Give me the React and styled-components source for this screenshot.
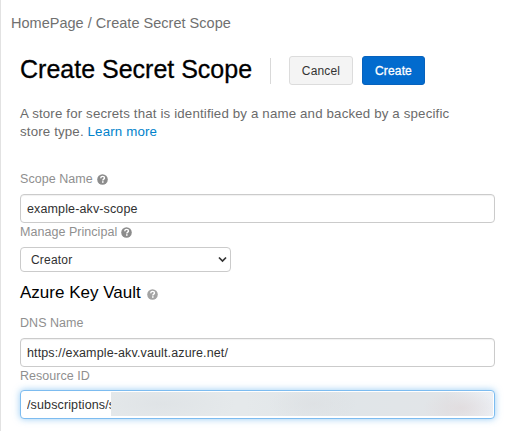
import React from "react";
import styled, { createGlobalStyle } from "styled-components";

const GlobalStyle = createGlobalStyle`
  *, *::before, *::after { box-sizing: border-box; }
  html, body { margin: 0; background: #fff; }
  body { font-family: "Liberation Sans", Arial, sans-serif; overflow: hidden; }
`;

const Page = styled.main`
  height: 431px;
  border-left: 1px solid #e2e2e2;
  padding: 14px 17px 0 10px;
  display: flex;
  flex-direction: column;
`;

const Breadcrumb = styled.nav`
  height: 19px;
  font-size: 14.5px;
  line-height: 19px;
  letter-spacing: 0.02px;
  color: #707070;
  white-space: nowrap;
`;

const Content = styled.div`
  padding: 22px 0 0 9px;
  display: flex;
  flex-direction: column;
`;

const Header = styled.header`
  display: flex;
  align-items: center;
  height: 31px;
`;

const Title = styled.h1`
  width: 250px;
  margin: 0;
  font-size: 25px;
  line-height: 28px;
  font-weight: 400;
  color: #000;
  white-space: nowrap;
  padding-bottom: 4px;
  -webkit-text-stroke: 0.3px #000;
`;

const Divider = styled.span`
  width: 1px;
  height: 26px;
  margin-right: 18px;
  background: #d9d9d9;
`;

const Button = styled.button`
  width: ${(p) => (p.$primary ? 63 : 64)}px;
  height: 29px;
  margin: 0 9px 0 0;
  padding: 1px 0 0;
  border: 1px solid ${(p) => (p.$primary ? "#0762bd" : "#dcdcdc")};
  border-radius: 3px;
  background: ${(p) => (p.$primary ? "#026bce" : "#f4f4f4")};
  color: ${(p) => (p.$primary ? "#fff" : "#333")};
  font-family: inherit;
  font-size: 12px;
  letter-spacing: 0.15px;
  -webkit-text-stroke: ${(p) => (p.$primary ? "0.3px #fff" : "0")};
`;

const Description = styled.p`
  width: 460px;
  margin: 19px 0 0;
  font-size: 13.3px;
  line-height: 18px;
  letter-spacing: 0.15px;
  color: #6b6b6b;
  white-space: nowrap;
`;

const Link = styled.a`
  color: #0082cb;
  text-decoration: none;
`;

const Label = styled.label`
  display: flex;
  align-items: center;
  gap: 4px;
  height: 18px;
  margin-top: ${(p) => p.$top || 0}px;
  margin-bottom: ${(p) => p.$bottom || 0}px;
  font-size: 12.5px;
  letter-spacing: 0.04px;
  color: #8f8f8f;
`;

const Field = styled.div`
  position: relative;
  width: 475px;
  height: 29px;
  padding: 0 6px;
  display: flex;
  align-items: center;
  border: 1px solid ${(p) => (p.$focused ? "#7dbcf0" : "#cbcbcb")};
  border-radius: 4px;
  background: #fff;
  box-shadow: ${(p) => (p.$focused ? "0 0 7px rgba(82, 168, 236, 0.6)" : "inset 0 1px 1px rgba(0, 0, 0, 0.06)")};
`;

const TextInput = styled.input`
  width: ${(p) => (p.$short ? "92px" : "100%")};
  height: 25px;
  padding: 0;
  border: 0;
  outline: 0;
  background: transparent;
  color: #303030;
  font-family: inherit;
  font-size: 12.5px;
  letter-spacing: 0.13px;
`;

const Redaction = styled.span`
  position: absolute;
  left: 90px;
  right: 1px;
  top: 1px;
  bottom: 2px;
  background:
    radial-gradient(ellipse 38px 18px at 350px 16px, rgba(224, 217, 219, 0.75), transparent),
    radial-gradient(ellipse 45px 18px at 202px 12px, rgba(221, 224, 227, 0.8), transparent),
    radial-gradient(ellipse 75px 20px at 50px 12px, rgba(222, 226, 229, 0.8), transparent),
    linear-gradient(90deg, #e5e9eb 0%, #e5e9eb 35%, #e0e5e8 62%, #e2e5e8 88%, #edf0f5 100%);
`;

const SelectBox = styled.div`
  width: 211px;
  height: 25px;
  padding: 0 3px 0 10px;
  display: flex;
  align-items: center;
  justify-content: space-between;
  border: 1px solid #cbcbcb;
  border-radius: 4px;
  font-size: 12px;
  letter-spacing: 0.2px;
  color: #303030;
`;

const SectionTitle = styled.h2`
  display: flex;
  align-items: center;
  gap: 6px;
  height: 22px;
  margin: 10px 0 0;
  font-size: 17px;
  font-weight: 400;
  color: #000;
`;

const HelpSvg = styled.svg`
  flex: none;
  width: 11px;
  height: 11px;
  margin-top: ${(p) => p.$drop || 0}px;
`;

const Chevron = styled.svg`
  width: 9px;
  height: 7px;
`;

function HelpIcon({ color = "#8c8c8c", drop = 0 }) {
  return (
    <HelpSvg viewBox="0 0 11 11" $drop={drop} aria-hidden="true">
      <circle cx="5.5" cy="5.5" r="5.3" fill={color} />
      <path d="M3.7 4.2C3.8 2.9 4.6 2.4 5.6 2.4c1.1 0 1.9.6 1.9 1.5 0 1.2-1.7 1.3-1.7 2.5" fill="none" stroke="#fff" strokeWidth="1.4" />
      <path d="M5 7.3h1.6v1.5H5z" fill="#fff" />
    </HelpSvg>
  );
}

export default function App() {
  return (
    <>
      <GlobalStyle />
      <Page>
        <Breadcrumb>HomePage / Create Secret Scope</Breadcrumb>
        <Content>
          <Header>
            <Title>Create Secret Scope</Title>
            <Divider />
            <Button>Cancel</Button>
            <Button $primary>Create</Button>
          </Header>
          <Description>
            A store for secrets that is identified by a name and backed by a specific
            <br />
            store type. <Link>Learn more</Link>
          </Description>
          <Label $top={29} $bottom={6}>
            Scope Name <HelpIcon />
          </Label>
          <Field>
            <TextInput defaultValue="example-akv-scope" />
          </Field>
          <Label $bottom={6}>
            Manage Principal <HelpIcon />
          </Label>
          <SelectBox>
            Creator
            <Chevron viewBox="0 0 9 7" aria-hidden="true">
              <path d="M1 1.5l3.5 3.6L8 1.5" fill="none" stroke="#333" strokeWidth="1.7" />
            </Chevron>
          </SelectBox>
          <SectionTitle>
            Azure Key Vault <HelpIcon color="#a3a3a3" drop={3} />
          </SectionTitle>
          <Label $top={10} $bottom={6}>DNS Name</Label>
          <Field>
            <TextInput defaultValue="https://example-akv.vault.azure.net/" />
          </Field>
          <Label $bottom={5}>Resource ID</Label>
          <Field $focused>
            <TextInput $short defaultValue="/subscriptions/s" />
            <Redaction />
          </Field>
        </Content>
      </Page>
    </>
  );
}
